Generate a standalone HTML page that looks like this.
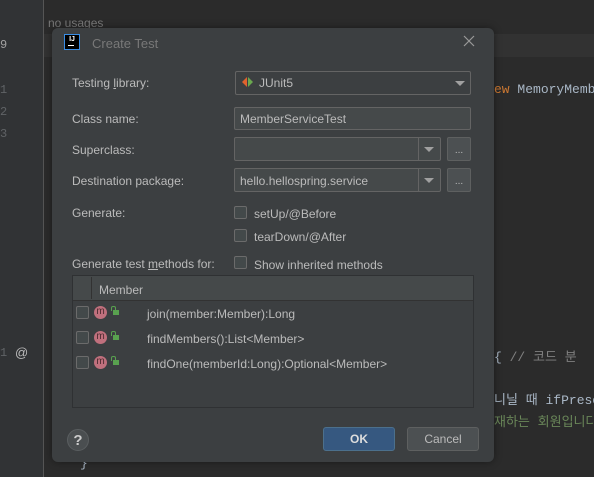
<!DOCTYPE html>
<html><head><meta charset="utf-8"><style>
body{margin:0;width:594px;height:477px;background:#2b2b2b;position:relative;overflow:hidden;font-family:"Liberation Sans","Noto Sans CJK KR",sans-serif;font-size:12px;color:#bbbbbb}
.a{position:absolute}
.gut{left:0;top:0;width:44px;height:477px;background:#313335}
.ln{color:#606366;font-family:"Liberation Mono",monospace;font-size:12px}
.code{font-family:"Liberation Mono","Noto Sans CJK KR",monospace;font-size:13px;white-space:nowrap}
.dlg{left:52px;top:28px;width:442px;height:434px;background:#3c3f41;border-radius:6px;box-shadow:0 0 8px rgba(0,0,0,.4)}
.lbl{left:72px;color:#bbbbbb;white-space:nowrap}
.fld{background:#45494a;border:1px solid #646464;box-sizing:border-box;border-radius:2px}
.cb{width:13px;height:13px;border:1px solid #6b6b6b;background:#43494a;box-sizing:border-box;border-radius:2px}
.arr{width:0;height:0;border-left:5px solid transparent;border-right:5px solid transparent;border-top:5px solid #a0a0a0}
.mi{width:13px;height:13px;border-radius:50%;background:#c0707d;color:#4a2a2f;font-size:10px;line-height:12px;text-align:center}
.btn{border:1px solid #5e6060;border-radius:3px;box-sizing:border-box;text-align:center;line-height:22px;font-size:12px}
</style></head><body>
<div class="a gut"></div>
<div class="a" style="left:44px;top:34px;width:550px;height:23px;background:#323232"></div>
<div class="a" style="left:43px;top:0;width:1px;height:477px;background:#555"></div>
<div class="a ln" style="left:0;top:38px;color:#a4a3a3">9</div>
<div class="a ln" style="left:0;top:83px">1</div>
<div class="a ln" style="left:0;top:105px">2</div>
<div class="a ln" style="left:0;top:127px">3</div>
<div class="a ln" style="left:0;top:346px">1</div>
<div class="a" style="left:15px;top:345px;color:#bbb;font-size:13px">@</div>
<div class="a" style="left:48px;top:16px;color:#787878;font-size:12px">no usages</div>
<div class="a code" style="left:494px;top:82px;color:#a9b7c6"><span style="color:#cc7832">ew</span> MemoryMemb</div>
<div class="a code" style="left:494px;top:346px;color:#a9b7c6">{ <span style="color:#808080">// 코드 분</span></div>
<div class="a code" style="left:494px;top:389px;color:#a9b7c6">니닐 때 ifPrese</div>
<div class="a code" style="left:494px;top:411px;color:#6a8759">재하는 회원입니다</div>
<div class="a code" style="left:80px;top:456px;color:#a9b7c6">}</div>

<div class="a dlg"></div>
<div class="a" style="left:64px;top:34px;width:16px;height:16px;background:#000;border:1px solid #3a8ee6;box-sizing:border-box;color:#fff;font-size:7px;font-weight:bold;line-height:9px;text-align:center">IJ<div style="width:6px;height:1px;background:#fff;margin:1px 0 0 3px"></div></div>
<div class="a" style="left:92px;top:36px;color:#787878;font-size:13px">Create Test</div>
<svg class="a" style="left:463px;top:35px" width="12" height="12"><path d="M1 1L11 11M11 1L1 11" stroke="#9a9a9a" stroke-width="1.2"/></svg>

<div class="a lbl" style="top:76px">Testing <u>l</u>ibrary:</div>
<div class="a lbl" style="top:112px">Class name:</div>
<div class="a lbl" style="top:143px">Superclass:</div>
<div class="a lbl" style="top:174px">Destination package:</div>
<div class="a lbl" style="top:206px">Generate:</div>
<div class="a lbl" style="top:257px">Generate test <u>m</u>ethods for:</div>

<div class="a fld" style="left:235px;top:71px;width:236px;height:24px;background:#3c3f41"></div>
<div class="a" style="left:242px;top:77px;width:0;height:0;border-top:5px solid transparent;border-bottom:5px solid transparent;border-right:5px solid #e0622d"></div>
<div class="a" style="left:248px;top:77px;width:0;height:0;border-top:5px solid transparent;border-bottom:5px solid transparent;border-left:5px solid #6aa84f"></div>
<div class="a" style="left:259px;top:76px">JUnit5</div>
<div class="a arr" style="left:455px;top:81px"></div>

<div class="a fld" style="left:234px;top:107px;width:237px;height:23px"></div>
<div class="a" style="left:240px;top:112px">MemberServiceTest</div>

<div class="a fld" style="left:234px;top:137px;width:207px;height:24px"></div>
<div class="a" style="left:418px;top:138px;width:1px;height:22px;background:#646464"></div>
<div class="a arr" style="left:424px;top:147px"></div>
<div class="a fld" style="left:447px;top:137px;width:24px;height:24px;background:#4c5052;border-color:#5e6060;color:#bbb;text-align:center;line-height:26px;font-size:10px">...</div>

<div class="a fld" style="left:234px;top:168px;width:207px;height:24px"></div>
<div class="a" style="left:418px;top:169px;width:1px;height:22px;background:#646464"></div>
<div class="a arr" style="left:424px;top:178px"></div>
<div class="a" style="left:240px;top:174px">hello.hellospring.service</div>
<div class="a fld" style="left:447px;top:168px;width:24px;height:24px;background:#4c5052;border-color:#5e6060;color:#bbb;text-align:center;line-height:26px;font-size:10px">...</div>

<div class="a cb" style="left:234px;top:206px"></div><div class="a" style="left:254px;top:207px">setUp/@Before</div>
<div class="a cb" style="left:234px;top:229px"></div><div class="a" style="left:254px;top:230px">tearDown/@After</div>
<div class="a cb" style="left:234px;top:256px"></div><div class="a" style="left:254px;top:258px">Show inherited methods</div>

<div class="a" style="left:72px;top:275px;width:402px;height:133px;border:1px solid #2f3133;box-sizing:border-box;background:#3c3f41"></div>
<div class="a" style="left:73px;top:276px;width:400px;height:24px;background:#45494a;border-bottom:1px solid #323232"></div>
<div class="a" style="left:91px;top:277px;width:1px;height:22px;background:#323232"></div>
<div class="a" style="left:99px;top:283px">Member</div>

<div class="a cb" style="left:76px;top:306px"></div><div class="a mi" style="left:94px;top:306px">m</div>
<div class="a" style="left:113px;top:310px;width:6px;height:5px;background:#59a14f"></div><div class="a" style="left:111px;top:306px;width:3px;height:4px;border:1px solid #59a14f;border-bottom:0;border-radius:2px 2px 0 0"></div>
<div class="a" style="left:147px;top:307px">join(member:Member):Long</div>

<div class="a cb" style="left:76px;top:331px"></div><div class="a mi" style="left:94px;top:331px">m</div>
<div class="a" style="left:113px;top:335px;width:6px;height:5px;background:#59a14f"></div><div class="a" style="left:111px;top:331px;width:3px;height:4px;border:1px solid #59a14f;border-bottom:0;border-radius:2px 2px 0 0"></div>
<div class="a" style="left:147px;top:332px">findMembers():List&lt;Member&gt;</div>

<div class="a cb" style="left:76px;top:356px"></div><div class="a mi" style="left:94px;top:356px">m</div>
<div class="a" style="left:113px;top:360px;width:6px;height:5px;background:#59a14f"></div><div class="a" style="left:111px;top:356px;width:3px;height:4px;border:1px solid #59a14f;border-bottom:0;border-radius:2px 2px 0 0"></div>
<div class="a" style="left:147px;top:357px">findOne(memberId:Long):Optional&lt;Member&gt;</div>

<div class="a" style="left:67px;top:429px;width:22px;height:22px;border-radius:50%;background:#4a4e50;border:1px solid #5a5e60;box-sizing:border-box;text-align:center;line-height:21px;font-size:15px;font-weight:bold;color:#ccc">?</div>
<div class="a btn" style="left:323px;top:427px;width:72px;height:24px;background:#365880;border-color:#4c708c;color:#ddd;font-weight:bold">OK</div>
<div class="a btn" style="left:407px;top:427px;width:72px;height:24px;background:#4c5052">Cancel</div>
</body></html>
